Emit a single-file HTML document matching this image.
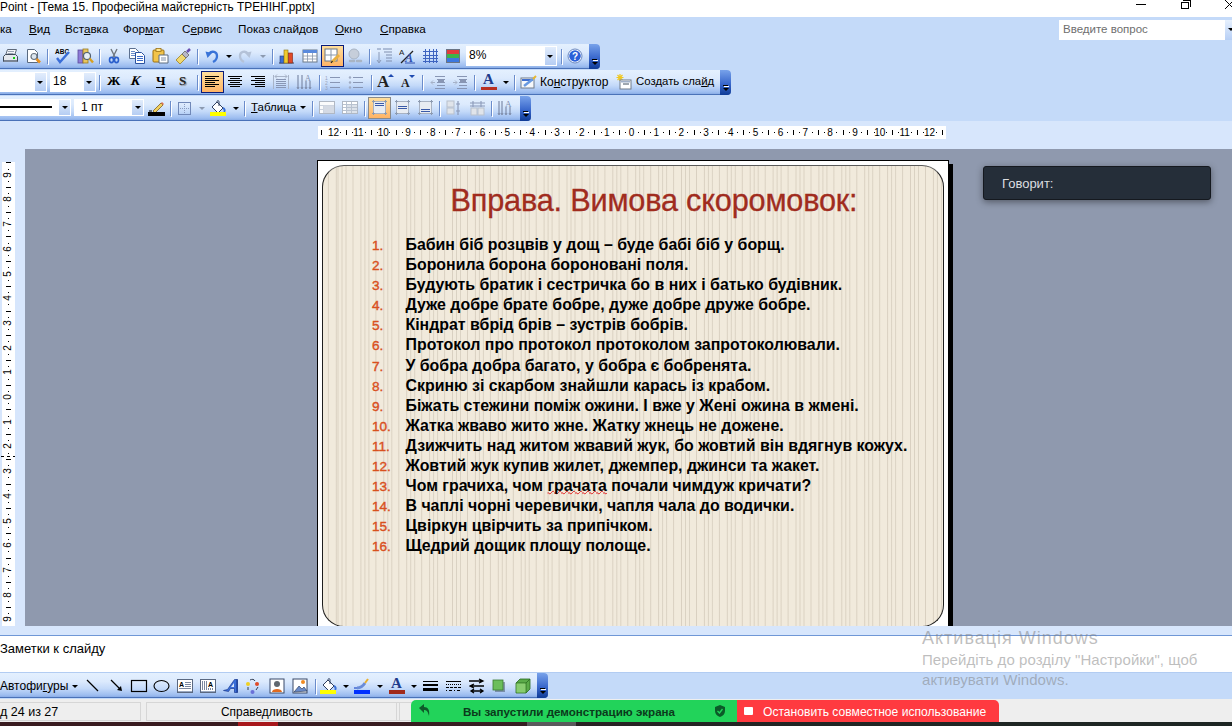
<!DOCTYPE html>
<html><head><meta charset="utf-8">
<style>
*{margin:0;padding:0;box-sizing:border-box}
html,body{width:1232px;height:726px;overflow:hidden;background:#C4DAF9;font-family:"Liberation Sans",sans-serif;position:relative;color:#000}
.a{position:absolute}
.t{position:absolute;white-space:nowrap}
i{position:absolute;display:block;font-style:normal}
#title{left:0;top:0;width:1232px;height:17px;background:#fff}
#menu{left:0;top:17px;width:1232px;height:27px;background:#C4DAF9}
.menu span{position:absolute;top:5px;font-size:11.7px;color:#000;white-space:nowrap}
.menu u{text-decoration:underline}
.tb{position:absolute;height:25px;background:linear-gradient(#E4F0FE 0%,#DCEAFD 35%,#C3D9F9 65%,#9DBDF0 92%,#89ACE6 100%);border-bottom:1px solid #4A72B8;border-radius:0 4px 4px 0}
.hd{position:absolute;right:0;top:0;width:11px;height:25px;background:linear-gradient(#78A2EA,#3A68CC 55%,#0E3A96);border-radius:0 4px 4px 0}
.hd:after{content:"";position:absolute;left:4px;top:16px;width:5px;height:1px;background:#fff;box-shadow:-1px -1px 0 #000}
.hd b{position:absolute;left:3px;top:18px;width:0;height:0;border-left:3px solid transparent;border-right:3px solid transparent;border-top:3px solid #000}
.sep{position:absolute;top:5px;width:2px;height:15px;border-left:1px solid #6A8CCB;border-right:1px solid #fff}
.cmb{position:absolute;background:#fff;border:1px solid #fff}
.dd{position:absolute;top:0;right:0;width:11px;height:100%;background:linear-gradient(#E6F0FD,#B7CFF5)}
.dd:after{content:"";position:absolute;left:3px;top:8px;border-left:3px solid transparent;border-right:3px solid transparent;border-top:3px solid #000}
.ar{position:absolute;width:0;height:0;border-left:3px solid transparent;border-right:3px solid transparent;border-top:3px solid #000}
.hl{position:absolute;background:linear-gradient(#FFDE9C,#FFB466);border:1px solid #0A1C7A}
#ruler{left:0;top:121px;width:1232px;height:28px;background:#D7E6FC}
#rstrip{left:318px;top:126px;width:628px;height:13px;background:#fff}
.rn{position:absolute;top:0px;width:20px;text-align:center;font-size:10px;line-height:13px;color:#000}
.rt{top:4px;width:1px;height:5px;background:#000}
.rd{top:6px;width:1px;height:1px;background:#000}
#gray{left:25px;top:149px;width:1207px;height:477px;background:#8F99AE}
#vr{left:0;top:149px;width:25px;height:477px;background:#D7E6FC}
#vstrip{left:2px;top:162px;width:13px;height:464px;background:#fff}
.vn{position:absolute;left:-4px;width:20px;height:20px;text-align:center;font-size:10px;line-height:20px;transform:rotate(-90deg)}
.vt{left:4px;width:5px;height:1px;background:#000}
.vd{left:6px;width:1px;height:1px;background:#000}
#slide{left:317px;top:160px;width:632px;height:466px;background:#fff;border:1px solid #000;border-bottom:none;overflow:hidden}
#shadow{left:948px;top:164px;width:5px;height:462px;background:#000}
#inner{left:4px;top:4px;width:622px;height:462px;border:1.5px solid #1E1E1E;border-top-color:#5A5A5A;border-radius:22px;overflow:hidden;
background:repeating-linear-gradient(90deg,#F1EADC 0,#E6DECF 0.5px,#D9D0C1 1px,#E6DECF 1.5px,#F1EADC 2px,#F1EADC 4px,#E6DECF 4.5px,#DAD2C3 5px,#E6DECF 5.5px,#F1EADC 6px,#F1EADC 8px,#E6DECF 8.5px,#DBD3C4 9px,#E6DECF 9.5px,#F1EADC 10px,#F1EADC 15px,#E6DECF 15.5px,#D9D0C1 16px,#E6DECF 16.5px,#F1EADC 17px,#F1EADC 22.9px);background-position:14px 0}
#stitle{left:127.5px;top:17px;font-size:30.7px;color:#A02C1E;letter-spacing:-0.2px;-webkit-text-stroke:0.3px #A02C1E;white-space:nowrap}
.ln{position:absolute;left:49px;font-size:13.6px;font-weight:normal;-webkit-text-stroke:0.4px #D9501E;color:#D9501E;line-height:17px;margin-top:1px;white-space:nowrap}
.lt{position:absolute;left:82.5px;font-size:15.9px;font-weight:bold;color:#000;line-height:17px;white-space:nowrap}
.sq{text-decoration:underline wavy #E02020;text-decoration-thickness:1px;text-underline-offset:-1px;text-decoration-skip-ink:none}
#spk{left:983px;top:166px;width:228px;height:34px;background:#252E39;border:1px solid #15191F;border-radius:3px;box-shadow:0 2px 7px rgba(0,0,0,.42)}
#spk span{position:absolute;left:18px;top:9px;font-size:13px;color:#DCDEE0;white-space:nowrap}
#sep2{left:0;top:626px;width:1232px;height:10px;background:#D7E6FC;border-bottom:1px solid #6F97D6}
#notes{left:0;top:636px;width:1232px;height:37px;background:#fff}
#draw{left:0;top:672px;width:1232px;height:27px;background:#C4DAF9;border-top:1px solid #B2CCF2}
#status{left:0;top:699px;width:1232px;height:23px;background:#EEEEEE}
#task{left:0;top:722px;width:1232px;height:4px;background:linear-gradient(90deg,#3A1C20 0,#3A1C20 238px,#A8181C 238px,#A8181C 278px,#3A1C20 278px,#361E22 527px,#5A5A5C 527px,#5A5A5C 576px,#2A2224 576px,#202624 800px,#1E2624 100%)}
.wm{position:absolute;white-space:nowrap;color:rgba(125,125,125,.5)}
</style></head><body>
<div id="title" class="a"><span class="t" style="left:0;top:0px;font-size:11.85px;color:#000">Point - [Тема 15. Професійна майстерність ТРЕНІНГ.pptx]</span>
<i style="left:1136px;top:4px;width:10px;height:1px;background:#000"></i>
<i style="left:1181px;top:2px;width:8px;height:7px;border:1px solid #000;background:#fff"></i>
<i style="left:1183px;top:0px;width:8px;height:7px;border-top:1px solid #000;border-right:1px solid #000"></i>
<svg class="a" style="left:1224px;top:0" width="8" height="10"><path d="M1 0 L8 7 M1 9 L8 2" stroke="#000" stroke-width="1"/></svg>
</div>
<div id="menu" class="a menu">
<span style="left:0">ка</span>
<span style="left:29px"><u>В</u>ид</span>
<span style="left:65px">Вст<u>а</u>вка</span>
<span style="left:123px">Фор<u>м</u>ат</span>
<span style="left:182px">С<u>е</u>рвис</span>
<span style="left:238px">Показ слай<u>д</u>ов</span>
<span style="left:335px"><u>О</u>кно</span>
<span style="left:380px"><u>С</u>правка</span>
<div class="cmb" style="left:1059px;top:3px;width:180px;height:20px;border:none"><span style="left:4px;top:3px;color:#6E6E6E;font-size:11.5px">Введите вопрос</span><div class="dd" style="left:166px;right:auto"></div></div>
</div>
<div class='tb' style='left:0;top:44px;width:600px'><div class='hd'><b></b></div></div>
<svg class='a' style='left:2px;top:48px' width='16' height='16' viewBox='0 0 16 16'><path d='M5.5 1.5h9l-2 6h-9z' fill='#F4F6FA' stroke='#5E6A7A'/><path d='M6 3.5h6M5.5 5.5h6' stroke='#9AA4B4'/><path d='M1.5 8.5l2-2h10l2 2v5h-14z' fill='#E4E8EE' stroke='#3E4A5A'/><rect x='2' y='12' width='13' height='2' fill='#7A8494'/><rect x='11' y='9' width='2' height='2' fill='#10D010'/></svg>
<svg class='a' style='left:26px;top:48px' width='16' height='16' viewBox='0 0 16 16'><path d='M1.5 1.5h7l3 3v10h-10z' fill='#fff' stroke='#5A6A80'/><circle cx='8' cy='8.5' r='3' fill='#DDE6EE' stroke='#6A7480' stroke-width='1.2'/><path d='M10.5 11l3.5 3.5' stroke='#E8901E' stroke-width='2.6'/></svg>
<i style='left:47px;top:49px;width:1px;height:15px;background:#6A8CCB'></i><i style='left:48px;top:50px;width:1px;height:15px;background:#fff'></i>
<svg class='a' style='left:54px;top:48px' width='17' height='16' viewBox='0 0 17 16'><text x='1' y='6' font-family='Liberation Sans' font-size='6.5' font-weight='bold' fill='#000'>ABC</text><path d='M3 10l3 4 9-10' fill='none' stroke='#3A6ED8' stroke-width='2.4'/></svg>
<svg class='a' style='left:77px;top:48px' width='17' height='16' viewBox='0 0 17 16'><rect x='1' y='2' width='5' height='13' fill='#8E7CD8' stroke='#5A4A9A' stroke-width='.8'/><rect x='6' y='1' width='5' height='14' fill='#E8C660' stroke='#9A7A20' stroke-width='.8'/><circle cx='10' cy='8' r='3.5' fill='#E6EEF4' stroke='#506070' stroke-width='1.2'/><path d='M12.5 10.5l3.5 4' stroke='#D8A020' stroke-width='2.4'/></svg>
<i style='left:99px;top:49px;width:1px;height:15px;background:#6A8CCB'></i><i style='left:100px;top:50px;width:1px;height:15px;background:#fff'></i>
<svg class='a' style='left:106px;top:48px' width='16' height='16' viewBox='0 0 16 16'><path d='M5 1l4.5 9M11 1l-4.5 9' stroke='#707880' stroke-width='1.4'/><ellipse cx='5.5' cy='12' rx='2' ry='2.6' fill='none' stroke='#2A5FCC' stroke-width='1.6'/><ellipse cx='10.5' cy='12' rx='2' ry='2.6' fill='none' stroke='#2A5FCC' stroke-width='1.6'/></svg>
<svg class='a' style='left:129px;top:48px' width='16' height='16' viewBox='0 0 16 16'><path d='M0.5 0.5h6l3 3v7h-9z' fill='#fff' stroke='#5C7090'/><path d='M2 3.5h4M2 5.5h5M2 7.5h5' stroke='#6A8CC8'/><path d='M6.5 4.5h6l3 3v8h-9z' fill='#fff' stroke='#2A52A0'/><path d='M8 8.5h6M8 10.5h6M8 12.5h6' stroke='#3A6AC8'/></svg>
<svg class='a' style='left:152px;top:48px' width='17' height='16' viewBox='0 0 17 16'><rect x='1' y='2' width='11' height='12' rx='1' fill='#F2C44A' stroke='#9C7010'/><rect x='4' y='0.5' width='5' height='3' fill='#FFE58A' stroke='#9C7010' stroke-width='.8'/><path d='M7 7h9v8H7z' fill='#fff' stroke='#5C6C80'/><path d='M9 10h5M9 12h5' stroke='#8090A8'/></svg>
<svg class='a' style='left:175px;top:48px' width='17' height='16' viewBox='0 0 17 16'><path d='M1 12l6-6 4 4-6 6z' fill='#F0D870' stroke='#A08020' stroke-width='.8'/><path d='M7 6l3-3 4 4-3 3z' fill='#B8B8C8' stroke='#666' stroke-width='.8'/><path d='M12 4l3-3' stroke='#6A50B0' stroke-width='2.5'/></svg>
<i style='left:197px;top:49px;width:1px;height:15px;background:#6A8CCB'></i><i style='left:198px;top:50px;width:1px;height:15px;background:#fff'></i>
<svg class='a' style='left:205px;top:48px' width='14' height='16' viewBox='0 0 14 16'><path d='M4 5.5c3-3 8-2 8 2.5c0 3-2 5-4 6' fill='none' stroke='#3A74D8' stroke-width='2.3'/><path d='M0.5 3.5l6.5 1.5-4.5 5z' fill='#3A74D8'/></svg>
<i style='left:226px;top:55px;width:0;height:0;border-left:3px solid transparent;border-right:3px solid transparent;border-top:3px solid #000'></i>
<svg class='a' style='left:238px;top:48px' width='14' height='16' viewBox='0 0 14 16'><path d='M10 5.5c-3-3-8-2-8 2.5c0 3 2 5 4 6' fill='none' stroke='#B4C2D8' stroke-width='2.3'/><path d='M13.5 3.5l-6.5 1.5 4.5 5z' fill='#B4C2D8'/></svg>
<i style='left:260px;top:55px;width:0;height:0;border-left:3px solid transparent;border-right:3px solid transparent;border-top:3px solid #8C9AB0'></i>
<i style='left:272px;top:49px;width:1px;height:15px;background:#6A8CCB'></i><i style='left:273px;top:50px;width:1px;height:15px;background:#fff'></i>
<svg class='a' style='left:278px;top:48px' width='17' height='16' viewBox='0 0 17 16'><path d='M1 15h15' stroke='#445' stroke-width='1'/><rect x='2' y='8' width='4' height='7' fill='#3D6FD4' stroke='#223C80' stroke-width='.6'/><rect x='6' y='2' width='4' height='13' fill='#F0CC30' stroke='#8C7010' stroke-width='.6'/><rect x='10.5' y='5' width='4' height='10' fill='#E04A28' stroke='#802010' stroke-width='.6'/></svg>
<svg class='a' style='left:302px;top:48px' width='16' height='16' viewBox='0 0 16 16'><rect x='1' y='2' width='14' height='12' fill='#fff' stroke='#6A7888'/><rect x='1' y='2' width='14' height='3' fill='#5A8ADC'/><path d='M1 8h14M1 11h14M5.5 5v9M10.5 5v9' stroke='#8896A8' stroke-width='.8'/></svg>
<div class='hl' style='left:321px;top:45px;width:23px;height:22px'></div>
<svg class='a' style='left:324px;top:48px' width='17' height='16' viewBox='0 0 17 16'><rect x='1' y='1' width='12' height='12' fill='#fff' stroke='#6A7888'/><path d='M1 7h12M7 1v12' stroke='#8896A8'/><path d='M8 14l7-7' stroke='#E8B040' stroke-width='3'/><path d='M7 15l1.5-2' stroke='#222' stroke-width='1.2'/></svg>
<svg class='a' style='left:347px;top:48px' width='17' height='16' viewBox='0 0 17 16'><circle cx='7' cy='6' r='5' fill='#C6CEDA' stroke='#A8B4C4'/><path d='M3 13h4M10 13h4' stroke='#A8B4C4' stroke-width='2.5' stroke-linecap='round'/></svg>
<i style='left:369px;top:49px;width:1px;height:15px;background:#6A8CCB'></i><i style='left:370px;top:50px;width:1px;height:15px;background:#fff'></i>
<svg class='a' style='left:376px;top:48px' width='17' height='16' viewBox='0 0 17 16'><path d='M1 1h4M7 1h9' stroke='#7A8CB0'/><path d='M3 4v10M1 12l2 3 2-3' stroke='#8A9AB8' fill='none'/><path d='M8 4h8M10 7h6M10 10h6M10 13h6' stroke='#8090B0' stroke-width='1.2'/></svg>
<svg class='a' style='left:399px;top:48px' width='17' height='16' viewBox='0 0 17 16'><text x='0' y='7' font-family='Liberation Sans' font-size='8' fill='#222'>A</text><path d='M2 15L14 3' stroke='#222' stroke-width='1.2'/><text x='6' y='14' font-family='Liberation Serif' font-style='italic' font-weight='bold' font-size='12' fill='#3050B0'>A</text><path d='M6 15h10' stroke='#3050B0'/></svg>
<svg class='a' style='left:423px;top:48px' width='15' height='16' viewBox='0 0 15 16'><path d='M2.5 1v14M6.5 1v14M10.5 1v14M13.5 1v14M0 3.5h15M0 7.5h15M0 10.5h15M0 13.5h15' stroke='#3E64C0' stroke-width='1'/></svg>
<svg class='a' style='left:446px;top:48px' width='14' height='16' viewBox='0 0 14 16'><rect x='1' y='2' width='12' height='4' fill='#E03C3C'/><rect x='1' y='6' width='12' height='4' fill='#3CB44A'/><rect x='1' y='10' width='12' height='4' fill='#3C78E0'/><rect x='0.5' y='1.5' width='13' height='13' fill='none' stroke='#6A7484'/></svg>
<div class='a' style='left:466px;top:46px;width:91px;height:20px;background:#fff'><span class='t' style='left:3px;top:2px;font-size:12px'>8%</span><div class='a' style='right:1px;top:1px;width:11px;height:18px;background:linear-gradient(#E2EDFC,#B5CDF3)'></div><i style='left:81px;top:9px;width:0;height:0;border-left:3px solid transparent;border-right:3px solid transparent;border-top:3px solid #000'></i></div>
<i style='left:561px;top:49px;width:1px;height:15px;background:#6A8CCB'></i><i style='left:562px;top:50px;width:1px;height:15px;background:#fff'></i>
<svg class='a' style='left:567px;top:48px' width='16' height='16' viewBox='0 0 16 16'><circle cx='8' cy='8' r='7' fill='#fff' stroke='#6A88C0'/><circle cx='8' cy='8' r='5.8' fill='#2A60D8'/><text x='5' y='12' font-family='Liberation Sans' font-weight='bold' font-size='10' fill='#fff'>?</text></svg>
<div class='tb' style='left:0;top:70px;width:731px'><div class='hd'><b></b></div></div>
<div class='a' style='left:0px;top:72px;width:47px;height:20px;background:#fff'><div class='a' style='right:1px;top:1px;width:11px;height:18px;background:linear-gradient(#E2EDFC,#B5CDF3)'></div><i style='left:37px;top:9px;width:0;height:0;border-left:3px solid transparent;border-right:3px solid transparent;border-top:3px solid #000'></i></div>
<div class='a' style='left:50px;top:72px;width:46px;height:20px;background:#fff'><span class='t' style='left:3px;top:2px;font-size:12px'>18</span><div class='a' style='right:1px;top:1px;width:11px;height:18px;background:linear-gradient(#E2EDFC,#B5CDF3)'></div><i style='left:36px;top:9px;width:0;height:0;border-left:3px solid transparent;border-right:3px solid transparent;border-top:3px solid #000'></i></div>
<i style='left:99px;top:75px;width:1px;height:15px;background:#6A8CCB'></i><i style='left:100px;top:76px;width:1px;height:15px;background:#fff'></i>
<span class='t' style='left:107px;top:73px;font-family:"Liberation Serif";font-weight:bold;font-size:13.5px'>Ж</span>
<span class='t' style='left:131px;top:73px;font-family:"Liberation Serif";font-weight:bold;font-style:italic;font-size:13.5px;display:inline-block;transform:skewX(-8deg)'>К</span>
<span class='t' style='left:156px;top:73px;font-family:"Liberation Serif";font-weight:bold;font-size:13px'>Ч</span><i style='left:156px;top:87px;width:9px;height:1px;background:#000'></i>
<span class='t' style='left:179px;top:73px;font-family:"Liberation Serif";font-weight:bold;font-size:13px;color:#222;text-shadow:1px 1px 1px #888'>S</span>
<i style='left:197px;top:75px;width:1px;height:15px;background:#6A8CCB'></i><i style='left:198px;top:76px;width:1px;height:15px;background:#fff'></i>
<div class='hl' style='left:201px;top:71px;width:23px;height:22px'></div>
<svg class='a' style='left:205px;top:74px' width='16' height='16' viewBox='0 0 16 16'><path d='M0 2.5h14' stroke='#000' stroke-width='1'/><path d='M0 4.5h10' stroke='#000' stroke-width='1'/><path d='M0 6.5h14' stroke='#000' stroke-width='1'/><path d='M0 8.5h10' stroke='#000' stroke-width='1'/><path d='M0 10.5h14' stroke='#000' stroke-width='1'/><path d='M0 12.5h10' stroke='#000' stroke-width='1'/></svg>
<svg class='a' style='left:228px;top:74px' width='16' height='16' viewBox='0 0 16 16'><path d='M0 2.5h14' stroke='#000' stroke-width='1'/><path d='M2 4.5h10' stroke='#000' stroke-width='1'/><path d='M0 6.5h14' stroke='#000' stroke-width='1'/><path d='M2 8.5h10' stroke='#000' stroke-width='1'/><path d='M0 10.5h14' stroke='#000' stroke-width='1'/><path d='M2 12.5h10' stroke='#000' stroke-width='1'/></svg>
<svg class='a' style='left:251px;top:74px' width='16' height='16' viewBox='0 0 16 16'><path d='M0 2.5h14' stroke='#000' stroke-width='1'/><path d='M4 4.5h10' stroke='#000' stroke-width='1'/><path d='M0 6.5h14' stroke='#000' stroke-width='1'/><path d='M4 8.5h10' stroke='#000' stroke-width='1'/><path d='M0 10.5h14' stroke='#000' stroke-width='1'/><path d='M4 12.5h10' stroke='#000' stroke-width='1'/></svg>
<svg class='a' style='left:273px;top:74px' width='17' height='16' viewBox='0 0 17 16'><path d='M0.5 1v14M15.5 1v14M2 2.5h12M2 2.5l2-2M2 2.5l2 2M14 2.5l-2-2M14 2.5l-2 2' stroke='#A8B4C8' fill='none'/><path d='M3 5.5h10M3 7.5h10M3 9.5h10M3 11.5h10M3 13.5h10' stroke='#8896B4' stroke-width='1'/></svg>
<svg class='a' style='left:296px;top:74px' width='16' height='16' viewBox='0 0 16 16'><path d='M2 1v13M6 1v13M10 7v7M14 7v7' stroke='#7E8CAA' stroke-width='1.2'/><path d='M1 13l1 2 1-2M5 13l1 2 1-2M9 13l1 2 1-2M13 13l1 2 1-2' stroke='#7E8CAA' fill='none'/><text x='9' y='7' font-family='Liberation Serif' font-size='8' fill='#8090B0'>A</text></svg>
<i style='left:319px;top:75px;width:1px;height:15px;background:#6A8CCB'></i><i style='left:320px;top:76px;width:1px;height:15px;background:#fff'></i>
<svg class='a' style='left:325px;top:74px' width='16' height='16' viewBox='0 0 16 16'><text x='0' y='6' font-family='Liberation Sans' font-size='5' fill='#98A4BC'>1</text><text x='0' y='11' font-family='Liberation Sans' font-size='5' fill='#98A4BC'>2</text><text x='0' y='16' font-family='Liberation Sans' font-size='5' fill='#98A4BC'>3</text><path d='M5 3.5h10M5 8.5h10M5 13.5h10' stroke='#8896B4' stroke-width='1'/></svg>
<svg class='a' style='left:348px;top:74px' width='16' height='16' viewBox='0 0 16 16'><circle cx='2' cy='3.5' r='1.2' fill='#A0ACC4'/><circle cx='2' cy='8.5' r='1.2' fill='#A0ACC4'/><circle cx='2' cy='13.5' r='1.2' fill='#A0ACC4'/><path d='M5 3.5h10M5 8.5h10M5 13.5h10' stroke='#8896B4' stroke-width='1'/></svg>
<i style='left:371px;top:75px;width:1px;height:15px;background:#6A8CCB'></i><i style='left:372px;top:76px;width:1px;height:15px;background:#fff'></i>
<span class='t' style='left:377px;top:72px;font-family:"Liberation Serif";font-weight:bold;font-size:17px;color:#222'>A</span><i style='left:388px;top:74px;border-left:3px solid transparent;border-right:3px solid transparent;border-bottom:3px solid #1E4AB0'></i>
<span class='t' style='left:401px;top:76px;font-family:"Liberation Serif";font-weight:bold;font-size:12px;color:#222'>A</span><i style='left:409px;top:75px;border-left:3px solid transparent;border-right:3px solid transparent;border-top:3px solid #1E4AB0'></i>
<i style='left:422px;top:75px;width:1px;height:15px;background:#6A8CCB'></i><i style='left:423px;top:76px;width:1px;height:15px;background:#fff'></i>
<svg class='a' style='left:430px;top:74px' width='16' height='16' viewBox='0 0 16 16'><path d='M5 2.5h10M7 5.5h8M7 8.5h8M7 11.5h8M5 14.5h10' stroke='#8896B4' stroke-width='1'/><path d='M8 6h6v2H8z' fill='#8896B4'/><path d='M1 8.5h4M1 8.5l2-2M1 8.5l2 2' stroke='#A6B2C8' fill='none'/></svg>
<svg class='a' style='left:452px;top:74px' width='16' height='16' viewBox='0 0 16 16'><path d='M5 2.5h10M7 5.5h8M7 8.5h8M7 11.5h8M5 14.5h10' stroke='#8896B4' stroke-width='1'/><path d='M8 6h6v2H8z' fill='#8896B4'/><path d='M1 8.5h4M5 8.5l-2-2M5 8.5l-2 2' stroke='#A6B2C8' fill='none'/></svg>
<i style='left:474px;top:75px;width:1px;height:15px;background:#6A8CCB'></i><i style='left:475px;top:76px;width:1px;height:15px;background:#fff'></i>
<span class='t' style='left:483px;top:71px;font-family:"Liberation Serif";font-weight:bold;font-size:15px;color:#1E3C8C'>A</span><i style='left:481px;top:87px;width:16px;height:3px;background:#B83022'></i>
<i style='left:503px;top:81px;width:0;height:0;border-left:3px solid transparent;border-right:3px solid transparent;border-top:3px solid #000'></i>
<i style='left:514px;top:75px;width:1px;height:15px;background:#6A8CCB'></i><i style='left:515px;top:76px;width:1px;height:15px;background:#fff'></i>
<svg class='a' style='left:520px;top:74px' width='18' height='16' viewBox='0 0 18 16'><rect x='1' y='4' width='13' height='10' fill='#F6F8FB' stroke='#707C8C'/><rect x='2' y='5' width='11' height='2' fill='#4070D0'/><path d='M4 12l9-7' stroke='#6A9AE0' stroke-width='2.5'/><path d='M13 5l3-3' stroke='#E8B830' stroke-width='2'/></svg>
<span class='t' style='left:540px;top:75px;font-size:12px'>Ко<u>н</u>структор</span>
<svg class='a' style='left:616px;top:74px' width='17' height='16' viewBox='0 0 17 16'><path d='M4 0v7M0.5 3.5h7M1.5 1l5 5M6.5 1l-5 5' stroke='#F0C820' stroke-width='1.2'/><rect x='4' y='6' width='11' height='9' fill='#fff' stroke='#707C8C'/><rect x='5' y='7' width='9' height='1.5' fill='#A0B0C8'/><path d='M7 10h6' stroke='#405060'/></svg>
<span class='t' style='left:636px;top:75px;font-size:11.4px'>Создать сла<u>й</u>д</span>
<div class='tb' style='left:0;top:96px;width:531px'><div class='hd'><b></b></div></div>
<div class='a' style='left:0;top:99px;width:71px;height:17px;background:#fff'><i style='left:0;top:7px;width:52px;height:2px;background:#000'></i><div class='a' style='right:1px;top:1px;width:11px;height:15px;background:linear-gradient(#E2EDFC,#B5CDF3)'></div><i style='left:62px;top:7px;width:0;height:0;border-left:3px solid transparent;border-right:3px solid transparent;border-top:3px solid #000'></i></div>
<div class='a' style='left:74px;top:99px;width:70px;height:17px;background:#fff'><span class='t' style='left:7px;top:1px;font-size:12px'>1 пт</span><div class='a' style='right:1px;top:1px;width:11px;height:15px;background:linear-gradient(#E2EDFC,#B5CDF3)'></div><i style='left:61px;top:7px;width:0;height:0;border-left:3px solid transparent;border-right:3px solid transparent;border-top:3px solid #000'></i></div>
<svg class='a' style='left:148px;top:100px' width='17' height='16' viewBox='0 0 17 16'><path d='M5 11l8-8 2 2-8 8z' fill='#F0D060' stroke='#806020' stroke-width='.8'/><path d='M13 3l1-1 2 2-1 1z' fill='#E07050'/><path d='M1 11h3' stroke='#000'/><rect x='0' y='12' width='17' height='4' fill='#000'/></svg>
<i style='left:170px;top:101px;width:1px;height:15px;background:#6A8CCB'></i><i style='left:171px;top:102px;width:1px;height:15px;background:#fff'></i>
<svg class='a' style='left:178px;top:100px' width='14' height='16' viewBox='0 0 14 16'><rect x='0.5' y='2.5' width='12' height='12' fill='none' stroke='#7088B8'/><path d='M6.5 4v10M2 8.5h10' stroke='#8A9CC0' stroke-dasharray='1 1'/></svg>
<i style='left:199px;top:107px;width:0;height:0;border-left:3px solid transparent;border-right:3px solid transparent;border-top:3px solid #8C9AB0'></i>
<svg class='a' style='left:210px;top:100px' width='17' height='16' viewBox='0 0 17 16'><path d='M2 7l5-5 6 6-5 5z' fill='#fff' stroke='#304060'/><path d='M7 2c0-2 2-2 2 0v4' stroke='#304060' fill='none'/><path d='M13 8c2 1 2 3 1 4' stroke='#3A70D8' stroke-width='2' fill='none'/><rect x='0' y='12' width='16' height='4' fill='#FFFF00'/></svg>
<i style='left:233px;top:107px;width:0;height:0;border-left:3px solid transparent;border-right:3px solid transparent;border-top:3px solid #000'></i>
<i style='left:244px;top:101px;width:1px;height:15px;background:#6A8CCB'></i><i style='left:245px;top:102px;width:1px;height:15px;background:#fff'></i>
<span class='t' style='left:251px;top:101px;font-size:11.5px'><u>Т</u>аблица</span>
<i style='left:300px;top:106px;width:0;height:0;border-left:3px solid transparent;border-right:3px solid transparent;border-top:3px solid #000'></i>
<i style='left:312px;top:101px;width:1px;height:15px;background:#6A8CCB'></i><i style='left:313px;top:102px;width:1px;height:15px;background:#fff'></i>
<svg class='a' style='left:319px;top:100px' width='17' height='16' viewBox='0 0 17 16'><rect x='0.5' y='1.5' width='15' height='12' fill='#C8D0DC' stroke='#B0B8C4'/><path d='M4 2h11v3H4zM1 2h3v3H1zM1 6h3v3H1zM1 10h3v3H1z' fill='#fff' opacity='.9'/><path d='M4.5 5.5h10.5v7.5H4.5z' fill='#D4DAE4'/></svg>
<svg class='a' style='left:342px;top:100px' width='17' height='16' viewBox='0 0 17 16'><rect x='0.5' y='1.5' width='15' height='12' fill='#B8C2D0' stroke='#B0B8C4'/><path d='M1 2h3v2H1zM5 2h4v2H5zM10 2h5v2h-5zM1 5h3v2H1zM1 8h3v2H1zM1 11h3v2H1z' fill='#fff'/><path d='M5 5h4v2H5zM10 5h5v2h-5zM5 8h4v2H5zM10 8h5v2h-5zM5 11h4v2H5zM10 11h5v2h-5z' fill='#DCE2EA'/></svg>
<i style='left:364px;top:101px;width:1px;height:15px;background:#6A8CCB'></i><i style='left:365px;top:102px;width:1px;height:15px;background:#fff'></i>
<div class='a' style='left:368px;top:97px;width:23px;height:22px;background:linear-gradient(#FFDE9C,#FFB466);border:1px solid #8A8A8A'></div>
<svg class='a' style='left:371px;top:100px' width='17' height='16' viewBox='0 0 17 16'><rect x='2.5' y='1.5' width='12' height='12' fill='#E8ECF2' stroke='#A8B2C2'/><path d='M4 3.5h9M4 5.5h9' stroke='#3A5AA8' stroke-width='1'/><path d='M2.5 0v3M14.5 0v3M2.5 12v3M14.5 12v3M1 1.5h3M13 1.5h3M1 13.5h3M13 13.5h3' stroke='#8C9AB0'/></svg>
<svg class='a' style='left:394px;top:100px' width='17' height='16' viewBox='0 0 17 16'><rect x='2.5' y='1.5' width='12' height='12' fill='#E8ECF2' stroke='#A8B2C2'/><path d='M4 6.5h9M4 8.5h9' stroke='#3A5AA8' stroke-width='1'/><path d='M2.5 0v3M14.5 0v3M2.5 12v3M14.5 12v3M1 1.5h3M13 1.5h3M1 13.5h3M13 13.5h3' stroke='#8C9AB0'/></svg>
<svg class='a' style='left:417px;top:100px' width='17' height='16' viewBox='0 0 17 16'><rect x='2.5' y='1.5' width='12' height='12' fill='#E8ECF2' stroke='#A8B2C2'/><path d='M4 9.5h9M4 11.5h9' stroke='#3A5AA8' stroke-width='1'/><path d='M2.5 0v3M14.5 0v3M2.5 12v3M14.5 12v3M1 1.5h3M13 1.5h3M1 13.5h3M13 13.5h3' stroke='#8C9AB0'/></svg>
<i style='left:439px;top:101px;width:1px;height:15px;background:#6A8CCB'></i><i style='left:440px;top:102px;width:1px;height:15px;background:#fff'></i>
<svg class='a' style='left:446px;top:100px' width='17' height='16' viewBox='0 0 17 16'><rect x='1' y='1' width='7' height='6' fill='#E0E4EA' stroke='#B8C0CC'/><rect x='1' y='8' width='7' height='6' fill='#E0E4EA' stroke='#B8C0CC'/><path d='M12 1v14M10 4h4M10 11h4' stroke='#8C9AB8' stroke-width='1.2'/></svg>
<svg class='a' style='left:469px;top:100px' width='17' height='16' viewBox='0 0 17 16'><rect x='2' y='8' width='6' height='7' fill='#E0E4EA' stroke='#B8C0CC'/><rect x='9' y='8' width='6' height='7' fill='#E0E4EA' stroke='#B8C0CC'/><path d='M1 3h15M1 6h15M4 1v6M12 1v6' stroke='#8C9AB8' stroke-width='1.1'/></svg>
<i style='left:491px;top:101px;width:1px;height:15px;background:#6A8CCB'></i><i style='left:492px;top:102px;width:1px;height:15px;background:#fff'></i>
<svg class='a' style='left:497px;top:100px' width='17' height='16' viewBox='0 0 17 16'><path d='M2 1v13M5 1v13M9 7v7M13 7v7' stroke='#7E8CAA' stroke-width='1.2'/><path d='M1 13l1 2 1-2M4 13l1 2 1-2M8 13l1 2 1-2M12 13l1 2 1-2' stroke='#7E8CAA' fill='none'/><text x='8' y='7' font-family='Liberation Serif' font-size='9' fill='#8090B0'>A</text></svg>
<div id="ruler" class="a"><div id="rstrip" class="a" style="top:5px"><span class='rn' style='left:5.5px'>12</span><i class='rt' style='left:28.0px'></i><i class='rd' style='left:21.7px'></i><i class='rd' style='left:34.2px'></i><span class='rn' style='left:30.4px'>11</span><i class='rt' style='left:52.8px'></i><i class='rd' style='left:46.6px'></i><i class='rd' style='left:59.0px'></i><span class='rn' style='left:55.2px'>10</span><i class='rt' style='left:77.6px'></i><i class='rd' style='left:71.4px'></i><i class='rd' style='left:83.8px'></i><span class='rn' style='left:80.0px'>9</span><i class='rt' style='left:102.4px'></i><i class='rd' style='left:96.2px'></i><i class='rd' style='left:108.7px'></i><span class='rn' style='left:104.9px'>8</span><i class='rt' style='left:127.3px'></i><i class='rd' style='left:121.1px'></i><i class='rd' style='left:133.5px'></i><span class='rn' style='left:129.7px'>7</span><i class='rt' style='left:152.1px'></i><i class='rd' style='left:145.9px'></i><i class='rd' style='left:158.3px'></i><span class='rn' style='left:154.5px'>6</span><i class='rt' style='left:176.9px'></i><i class='rd' style='left:170.7px'></i><i class='rd' style='left:183.1px'></i><span class='rn' style='left:179.4px'>5</span><i class='rt' style='left:201.8px'></i><i class='rd' style='left:195.6px'></i><i class='rd' style='left:208.0px'></i><span class='rn' style='left:204.2px'>4</span><i class='rt' style='left:226.6px'></i><i class='rd' style='left:220.4px'></i><i class='rd' style='left:232.8px'></i><span class='rn' style='left:229.0px'>3</span><i class='rt' style='left:251.4px'></i><i class='rd' style='left:245.2px'></i><i class='rd' style='left:257.6px'></i><span class='rn' style='left:253.8px'>2</span><i class='rt' style='left:276.3px'></i><i class='rd' style='left:270.0px'></i><i class='rd' style='left:282.5px'></i><span class='rn' style='left:278.7px'>1</span><i class='rt' style='left:301.1px'></i><i class='rd' style='left:294.9px'></i><i class='rd' style='left:307.3px'></i><span class='rn' style='left:303.5px'>0</span><i class='rt' style='left:325.9px'></i><i class='rd' style='left:319.7px'></i><i class='rd' style='left:332.1px'></i><span class='rn' style='left:328.3px'>1</span><i class='rt' style='left:350.7px'></i><i class='rd' style='left:344.5px'></i><i class='rd' style='left:357.0px'></i><span class='rn' style='left:353.2px'>2</span><i class='rt' style='left:375.6px'></i><i class='rd' style='left:369.4px'></i><i class='rd' style='left:381.8px'></i><span class='rn' style='left:378.0px'>3</span><i class='rt' style='left:400.4px'></i><i class='rd' style='left:394.2px'></i><i class='rd' style='left:406.6px'></i><span class='rn' style='left:402.8px'>4</span><i class='rt' style='left:425.2px'></i><i class='rd' style='left:419.0px'></i><i class='rd' style='left:431.4px'></i><span class='rn' style='left:427.6px'>5</span><i class='rt' style='left:450.1px'></i><i class='rd' style='left:443.9px'></i><i class='rd' style='left:456.3px'></i><span class='rn' style='left:452.5px'>6</span><i class='rt' style='left:474.9px'></i><i class='rd' style='left:468.7px'></i><i class='rd' style='left:481.1px'></i><span class='rn' style='left:477.3px'>7</span><i class='rt' style='left:499.7px'></i><i class='rd' style='left:493.5px'></i><i class='rd' style='left:505.9px'></i><span class='rn' style='left:502.1px'>8</span><i class='rt' style='left:524.6px'></i><i class='rd' style='left:518.3px'></i><i class='rd' style='left:530.8px'></i><span class='rn' style='left:527.0px'>9</span><i class='rt' style='left:549.4px'></i><i class='rd' style='left:543.2px'></i><i class='rd' style='left:555.6px'></i><span class='rn' style='left:551.8px'>10</span><i class='rt' style='left:574.2px'></i><i class='rd' style='left:568.0px'></i><i class='rd' style='left:580.4px'></i><span class='rn' style='left:576.6px'>11</span><i class='rt' style='left:599.0px'></i><i class='rd' style='left:592.8px'></i><i class='rd' style='left:605.3px'></i><span class='rn' style='left:601.5px'>12</span><i class='rt' style='left:623.9px'></i><i class='rd' style='left:617.7px'></i><i class='rt' style='left:3.1px'></i></div></div>
<div id="gray" class="a"></div>
<div id="vr" class="a"></div>
<div id="vstrip" class="a"><i class='vt' style='top:0.3px'></i><i class='vd' style='top:6.5px'></i><span class='vn' style='top:2.7px'>9</span><i class='vt' style='top:25.1px'></i><i class='vd' style='top:18.9px'></i><i class='vd' style='top:31.2px'></i><span class='vn' style='top:27.4px'>8</span><i class='vt' style='top:49.8px'></i><i class='vd' style='top:43.6px'></i><i class='vd' style='top:55.9px'></i><span class='vn' style='top:52.1px'>7</span><i class='vt' style='top:74.4px'></i><i class='vd' style='top:68.3px'></i><i class='vd' style='top:80.6px'></i><span class='vn' style='top:76.8px'>6</span><i class='vt' style='top:99.2px'></i><i class='vd' style='top:93.0px'></i><i class='vd' style='top:105.3px'></i><span class='vn' style='top:101.5px'>5</span><i class='vt' style='top:123.8px'></i><i class='vd' style='top:117.7px'></i><i class='vd' style='top:130.0px'></i><span class='vn' style='top:126.2px'>4</span><i class='vt' style='top:148.5px'></i><i class='vd' style='top:142.4px'></i><i class='vd' style='top:154.7px'></i><span class='vn' style='top:150.9px'>3</span><i class='vt' style='top:173.2px'></i><i class='vd' style='top:167.1px'></i><i class='vd' style='top:179.4px'></i><span class='vn' style='top:175.6px'>2</span><i class='vt' style='top:197.9px'></i><i class='vd' style='top:191.8px'></i><i class='vd' style='top:204.1px'></i><span class='vn' style='top:200.3px'>1</span><i class='vt' style='top:222.7px'></i><i class='vd' style='top:216.5px'></i><i class='vd' style='top:228.8px'></i><span class='vn' style='top:225.0px'>0</span><i class='vt' style='top:247.3px'></i><i class='vd' style='top:241.2px'></i><i class='vd' style='top:253.5px'></i><span class='vn' style='top:249.7px'>1</span><i class='vt' style='top:272.1px'></i><i class='vd' style='top:265.9px'></i><i class='vd' style='top:278.2px'></i><span class='vn' style='top:274.4px'>2</span><i class='vt' style='top:296.8px'></i><i class='vd' style='top:290.6px'></i><i class='vd' style='top:302.9px'></i><span class='vn' style='top:299.1px'>3</span><i class='vt' style='top:321.5px'></i><i class='vd' style='top:315.3px'></i><i class='vd' style='top:327.6px'></i><span class='vn' style='top:323.8px'>4</span><i class='vt' style='top:346.2px'></i><i class='vd' style='top:340.0px'></i><i class='vd' style='top:352.3px'></i><span class='vn' style='top:348.5px'>5</span><i class='vt' style='top:370.9px'></i><i class='vd' style='top:364.7px'></i><i class='vd' style='top:377.0px'></i><span class='vn' style='top:373.2px'>6</span><i class='vt' style='top:395.6px'></i><i class='vd' style='top:389.4px'></i><i class='vd' style='top:401.7px'></i><span class='vn' style='top:397.9px'>7</span><i class='vt' style='top:420.2px'></i><i class='vd' style='top:414.1px'></i><i class='vd' style='top:426.4px'></i><span class='vn' style='top:422.6px'>8</span><i class='vt' style='top:445.0px'></i><i class='vd' style='top:438.8px'></i><i class='vd' style='top:451.1px'></i><span class='vn' style='top:447.3px'>9</span></div>
<i style="left:1px;top:456px;width:3px;height:1px;background:#000"></i><i style="left:7px;top:456px;width:3px;height:1px;background:#000"></i><i style="left:13px;top:456px;width:2px;height:1px;background:#000"></i>
<div id="slide" class="a"><div id="inner" class="a">
<div id="stitle" class="a">Вправа. Вимова скоромовок:</div>
<div class='ln' style='top:70.00px'>1.</div><div class='lt' style='top:70.00px'>Бабин біб розцвів у дощ – буде бабі біб у борщ.</div><div class='ln' style='top:90.09px'>2.</div><div class='lt' style='top:90.09px'>Боронила борона бороновані поля.</div><div class='ln' style='top:110.18px'>3.</div><div class='lt' style='top:110.18px'>Будують братик і сестричка бо в них і батько будівник.</div><div class='ln' style='top:130.27px'>4.</div><div class='lt' style='top:130.27px'>Дуже добре брате бобре, дуже добре друже бобре.</div><div class='ln' style='top:150.36px'>5.</div><div class='lt' style='top:150.36px'>Кіндрат вбрід брів – зустрів бобрів.</div><div class='ln' style='top:170.45px'>6.</div><div class='lt' style='top:170.45px'>Протокол про протокол протоколом запротоколювали.</div><div class='ln' style='top:190.54px'>7.</div><div class='lt' style='top:190.54px'>У бобра добра багато, у бобра є бобренята.</div><div class='ln' style='top:210.63px'>8.</div><div class='lt' style='top:210.63px'>Скриню зі скарбом знайшли карась із крабом.</div><div class='ln' style='top:230.72px'>9.</div><div class='lt' style='top:230.72px'>Біжать стежини поміж ожини. І вже у Жені ожина в жмені.</div><div class='ln' style='top:250.81px'>10.</div><div class='lt' style='top:250.81px'>Жатка жваво жито жне. Жатку жнець не дожене.</div><div class='ln' style='top:270.90px'>11.</div><div class='lt' style='top:270.90px'>Дзижчить над житом жвавий жук, бо жовтий він вдягнув кожух.</div><div class='ln' style='top:290.99px'>12.</div><div class='lt' style='top:290.99px'>Жовтий жук купив жилет, джемпер, джинси та жакет.</div><div class='ln' style='top:311.08px'>13.</div><div class='lt' style='top:311.08px'>Чом грачиха, чом <span class='sq'>грачата</span> почали чимдуж кричати?</div><div class='ln' style='top:331.17px'>14.</div><div class='lt' style='top:331.17px'>В чаплі чорні черевички, чапля чала до водички.</div><div class='ln' style='top:351.26px'>15.</div><div class='lt' style='top:351.26px'>Цвіркун цвірчить за припічком.</div><div class='ln' style='top:371.35px'>16.</div><div class='lt' style='top:371.35px'>Щедрий дощик площу полоще.</div>
</div></div>
<div id="shadow" class="a"></div>
<div id="spk" class="a"><span>Говорит:</span></div>
<div id="sep2" class="a"></div>
<div id="notes" class="a"><span class="t" style="left:0;top:5px;font-size:13px">Заметки к слайду</span></div>
<div id="draw" class="a"></div>
<div class='tb' style='left:0;top:673px;width:548px;height:25px'><div class='hd'><b></b></div></div>
<span class='t' style='left:0;top:679px;font-size:12px'>Автофи<u>г</u>уры</span>
<i style='left:72px;top:685px;width:0;height:0;border-left:3px solid transparent;border-right:3px solid transparent;border-top:3px solid #000'></i>
<svg class='a' style='left:86px;top:678px' width='14' height='16' viewBox='0 0 14 16'><path d='M1 2l11 11' stroke='#000' stroke-width='1.2'/></svg>
<svg class='a' style='left:110px;top:678px' width='14' height='16' viewBox='0 0 14 16'><path d='M1 2l9 9' stroke='#000' stroke-width='1.2'/><path d='M12 13l-5-1 4-4z' fill='#000'/></svg>
<svg class='a' style='left:130px;top:678px' width='18' height='16' viewBox='0 0 18 16'><rect x='1.5' y='2.5' width='15' height='11' fill='none' stroke='#000' stroke-width='1.2'/></svg>
<svg class='a' style='left:153px;top:678px' width='18' height='16' viewBox='0 0 18 16'><ellipse cx='8.5' cy='8' rx='7.5' ry='5.5' fill='none' stroke='#000' stroke-width='1.1'/></svg>
<svg class='a' style='left:177px;top:678px' width='16' height='16' viewBox='0 0 16 16'><rect x='0.5' y='1.5' width='15' height='13' fill='#fff' stroke='#5A6880'/><path d='M1 13.5h14' stroke='#9AA8C0' stroke-width='1'/><text x='2' y='8.5' font-family='Liberation Sans' font-weight='bold' font-size='7' fill='#000'>A</text><path d='M8 4.5h6M8 6.5h6M8 8.5h6M2 10.5h12' stroke='#7A88A0' stroke-width='1'/></svg>
<svg class='a' style='left:200px;top:678px' width='16' height='16' viewBox='0 0 16 16'><rect x='0.5' y='1.5' width='15' height='13' fill='#fff' stroke='#5A6880'/><path d='M1 13.5h14' stroke='#9AA8C0' stroke-width='1'/><path d='M2.5 3v9M4.5 3v9M6.5 3v9' stroke='#7A88A0' stroke-width='1'/><text x='8' y='8.5' font-family='Liberation Sans' font-weight='bold' font-size='7' fill='#000'>A</text><path d='M8.5 10v2M10.5 10v2M12.5 10v2' stroke='#7A88A0' stroke-width='1'/></svg>
<svg class='a' style='left:223px;top:678px' width='17' height='16' viewBox='0 0 17 16'><path d='M0.5 12.5l4-1 7-10h3v13h-3v-4h-4l-2 3z' fill='#3A6ED8' stroke='#1A3A90' stroke-width='.7'/><path d='M11 5l-3 4h3z' fill='#D8E6FA'/><path d='M14 1.5v13' stroke='#1A3A90' stroke-width='1.2'/></svg>
<svg class='a' style='left:245px;top:678px' width='15' height='16' viewBox='0 0 15 16'><circle cx='3' cy='6' r='2' fill='#F0D020'/><circle cx='12' cy='6' r='2' fill='#E04A28'/><circle cx='7.5' cy='14' r='2' fill='#6A70D8'/><path d='M5 2c2-1 4-1 5 1M3 9v3M13 9l-2 3' stroke='#303C50' fill='none'/></svg>
<svg class='a' style='left:269px;top:678px' width='16' height='16' viewBox='0 0 16 16'><rect x='1' y='1' width='14' height='14' fill='#fff' stroke='#384868'/><circle cx='8' cy='6' r='3' fill='#606870'/><path d='M3 14c0-4 10-4 10 0z' fill='#E06A20'/></svg>
<svg class='a' style='left:292px;top:678px' width='16' height='16' viewBox='0 0 16 16'><rect x='1' y='1' width='14' height='14' fill='#fff' stroke='#384868'/><path d='M2 14l5-6 3 3 2-2 3 4z' fill='#6A8AC8' stroke='#203050' stroke-width='.6'/><circle cx='11' cy='4' r='2' fill='#F08A20'/></svg>
<i style='left:315px;top:679px;width:1px;height:15px;background:#6A8CCB'></i><i style='left:316px;top:680px;width:1px;height:15px;background:#fff'></i>
<svg class='a' style='left:320px;top:678px' width='17' height='16' viewBox='0 0 17 16'><path d='M3 7l5-5 6 6-5 5z' fill='#fff' stroke='#304060'/><path d='M8 2c0-2 2-2 2 0v4' stroke='#304060' fill='none'/><path d='M14 8c2 1 2 3 1 4' stroke='#3A70D8' stroke-width='2' fill='none'/><rect x='0' y='12' width='16' height='4' fill='#FFFF00'/></svg>
<i style='left:343px;top:685px;width:0;height:0;border-left:3px solid transparent;border-right:3px solid transparent;border-top:3px solid #000'></i>
<svg class='a' style='left:354px;top:678px' width='17' height='16' viewBox='0 0 17 16'><path d='M3 10c3 0 6-2 8-5' stroke='#6A8CD8' stroke-width='3' fill='none'/><path d='M11 5l3-4' stroke='#E8B030' stroke-width='2'/><path d='M0 10h3' stroke='#0030C0'/><rect x='0' y='12' width='16' height='4' fill='#0030FF'/></svg>
<i style='left:377px;top:685px;width:0;height:0;border-left:3px solid transparent;border-right:3px solid transparent;border-top:3px solid #000'></i>
<span class='t' style='left:391px;top:675px;font-family:"Liberation Serif";font-weight:bold;font-size:15px;color:#1E3C8C'>A</span><i style='left:389px;top:690px;width:16px;height:4px;background:#A02A1C'></i>
<i style='left:411px;top:685px;width:0;height:0;border-left:3px solid transparent;border-right:3px solid transparent;border-top:3px solid #000'></i>
<svg class='a' style='left:423px;top:678px' width='16' height='16' viewBox='0 0 16 16'><rect x='0' y='3' width='15' height='1' fill='#000'/><rect x='0' y='6' width='15' height='2' fill='#000'/><rect x='0' y='10' width='15' height='3' fill='#000'/></svg>
<svg class='a' style='left:446px;top:678px' width='16' height='16' viewBox='0 0 16 16'><path d='M0 3.5h15' stroke='#000'/><path d='M0 6.5h15' stroke='#000' stroke-dasharray='1 1'/><path d='M0 9.5h15' stroke='#000' stroke-dasharray='3 1'/><path d='M0 12.5h15' stroke='#000' stroke-dasharray='1 2 3 2'/></svg>
<svg class='a' style='left:469px;top:678px' width='16' height='16' viewBox='0 0 16 16'><path d='M0 3h14M10 1l4 2-4 2M1 8h14M5 6l-4 2 4 2M2 13h12M5 11l-3 2 3 2M11 11l3 2-3 2' stroke='#000' stroke-width='1.3' fill='none'/></svg>
<svg class='a' style='left:492px;top:678px' width='14' height='16' viewBox='0 0 14 16'><rect x='3' y='4' width='10' height='10' fill='#405060' opacity='.5'/><rect x='1' y='2' width='10' height='10' fill='#6CBE5C' stroke='#3A7A30' stroke-width='.8'/></svg>
<svg class='a' style='left:515px;top:678px' width='16' height='16' viewBox='0 0 16 16'><path d='M1 5l4-4h10v10l-4 4H1z' fill='#5AAA48' stroke='#2A6A20' stroke-width='.8'/><path d='M1 5h10v10M11 5l4-4' stroke='#2A6A20' stroke-width='.8' fill='none'/><rect x='1.5' y='5.5' width='9' height='9' fill='#88CC70'/></svg>
<div id="status" class="a"></div>
<i style='left:0;top:702px;width:141px;height:19px;border:1px solid #D6D6D6;border-left:none'></i><span class='t' style='left:0;top:705px;font-size:12.5px'>д 24 из 27</span>
<i style='left:146px;top:702px;width:254px;height:19px;border:1px solid #D6D6D6'></i><span class='t' style='left:221px;top:705px;font-size:11.9px'>Справедливость</span>
<i style='left:396px;top:702px;width:20px;height:19px;border:1px solid #D6D6D6'></i>
<div class='a' style='left:411px;top:700px;width:326px;height:22px;background:#22D35A;border-radius:5px 0 0 0'></div>
<svg class='a' style='left:418px;top:703px' width='12' height='14' viewBox='0 0 12 14'><path d='M11 13c-1-4-2-6-5-6v3L1 5l5-4v3c4 0 6 3 5 9z' fill='#0E5A2A'/></svg>
<span class='t' style='left:463px;top:705px;font-size:11.6px;font-weight:bold;color:#0B3A1C'>Вы запустили демонстрацию экрана</span>
<svg class='a' style='left:714px;top:704px' width='12' height='14' viewBox='0 0 12 14'><path d='M6 1l5 2v4c0 3-2 5-5 6-3-1-5-3-5-6V3z' fill='#0B5A28'/><path d='M3.5 7l2 2 3-4' stroke='#22D35A' stroke-width='1.3' fill='none'/></svg>
<div class='a' style='left:737px;top:700px;width:262px;height:22px;background:#FF3A40;border-radius:0 5px 0 0'></div>
<i style='left:744px;top:707px;width:9px;height:8px;background:#fff;border-radius:1px'></i>
<span class='t' style='left:763px;top:705px;font-size:12.1px;color:#fff'>Остановить совместное использование</span>
<div id="task" class="a"></div>
<div class="wm" style="left:922px;top:628px;font-size:18px;letter-spacing:1px">Активація Windows</div>
<div class="wm" style="left:922px;top:651px;font-size:15px;letter-spacing:0.05px">Перейдіть до розділу "Настройки", щоб</div>
<div class="wm" style="left:922px;top:671px;font-size:15px;letter-spacing:0.05px">активувати Windows.</div>
</body></html>
